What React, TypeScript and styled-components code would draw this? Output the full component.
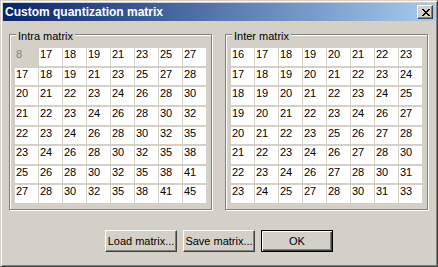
import React from "react";
import styled, { createGlobalStyle } from "styled-components";

const Global = createGlobalStyle`
  html, body { margin: 0; padding: 0; background: #d4d0c8; }
  * { box-sizing: border-box; }
`;

const Window = styled.div`
  width: 438px;
  height: 267px;
  background: #d4d0c8;
  border: 1px solid;
  border-color: #d4d0c8 #404040 #404040 #d4d0c8;
  box-shadow: inset 1px 1px #ffffff, inset -1px -1px #808080;
  padding: 2px;
  display: flex;
  flex-direction: column;
  font-family: "Liberation Sans", Arial, sans-serif;
  font-size: 11px;
  color: #000;
`;

const TitleBar = styled.div`
  height: 18px;
  display: flex;
  align-items: center;
  padding: 0 2px;
  background: linear-gradient(to right, #0a246a, #a6caf0);
`;

const Title = styled.div`
  flex: 1;
  color: #fff;
  font-weight: bold;
  font-size: 12px;
  line-height: 14px;
  white-space: nowrap;
`;

const CloseButton = styled.div`
  width: 16px;
  height: 14px;
  background: #d4d0c8;
  border: 1px solid;
  border-color: #ffffff #404040 #404040 #ffffff;
  box-shadow: inset -1px -1px #808080;
  display: flex;
  align-items: flex-start;
  padding: 3px 2px 2px 4px;
`;

const Body = styled.div`
  flex: 1;
  display: flex;
  flex-direction: column;
  padding: 13px 0 0 6px;
`;

const Groups = styled.div`
  display: flex;
  gap: 13px;
`;

const Group = styled.div`
  position: relative;
  width: 203px;
  height: 176px;
  border: 1px solid #808080;
  box-shadow: inset 1px 1px #ffffff, 1px 1px #ffffff;
  padding: 13px 5px 6px 5px;
`;

const GroupLabel = styled.div`
  position: absolute;
  top: -5px;
  left: 6px;
  padding: 0 2px;
  line-height: 13px;
  background: #d4d0c8;
`;

const Grid = styled.div`
  display: grid;
  grid-template-columns: repeat(8, 23px);
  grid-template-rows: repeat(8, 1fr);
  column-gap: 1px;
  row-gap: 2px;
  height: 155px;
`;

const Cell = styled.div<{ $disabled?: boolean }>`
  background: ${(p) => (p.$disabled ? "transparent" : "#ffffff")};
  color: ${(p) => (p.$disabled ? "#808080" : "#000000")};
  line-height: 13px;
  padding-left: 1px;
`;

const Buttons = styled.div`
  display: flex;
  justify-content: center;
  gap: 6px;
  margin-top: 20px;
  padding-right: 6px;
`;

const Button = styled.div<{ $default?: boolean }>`
  width: 72px;
  height: 22px;
  display: flex;
  align-items: center;
  justify-content: center;
  background: #d4d0c8;
  border: 1px solid;
  border-color: ${(p) =>
    p.$default ? "#000000" : "#ffffff #404040 #404040 #ffffff"};
  box-shadow: ${(p) =>
    p.$default
      ? "inset 1px 1px #ffffff, inset -1px -1px #404040, inset -2px -2px #808080"
      : "inset -1px -1px #808080"};
  line-height: 13px;
`;

const intra = [
  [8, 17, 18, 19, 21, 23, 25, 27],
  [17, 18, 19, 21, 23, 25, 27, 28],
  [20, 21, 22, 23, 24, 26, 28, 30],
  [21, 22, 23, 24, 26, 28, 30, 32],
  [22, 23, 24, 26, 28, 30, 32, 35],
  [23, 24, 26, 28, 30, 32, 35, 38],
  [25, 26, 28, 30, 32, 35, 38, 41],
  [27, 28, 30, 32, 35, 38, 41, 45],
];

const inter = [
  [16, 17, 18, 19, 20, 21, 22, 23],
  [17, 18, 19, 20, 21, 22, 23, 24],
  [18, 19, 20, 21, 22, 23, 24, 25],
  [19, 20, 21, 22, 23, 24, 26, 27],
  [20, 21, 22, 23, 25, 26, 27, 28],
  [21, 22, 23, 24, 26, 27, 28, 30],
  [22, 23, 24, 26, 27, 28, 30, 31],
  [23, 24, 25, 27, 28, 30, 31, 33],
];

const CloseIcon = () => (
  <svg width="8" height="7" viewBox="0 0 8 7" shapeRendering="crispEdges">
    <path
      fill="#000"
      d="M0 0h2v1H0zM6 0h2v1H6zM1 1h2v1H1zM5 1h2v1H5zM2 2h4v1H2zM3 3h2v1H3zM2 4h4v1H2zM1 5h2v1H1zM5 5h2v1H5zM0 6h2v1H0zM6 6h2v1H6z"
    />
  </svg>
);

const MatrixGroup = ({
  label,
  data,
  firstDisabled,
}: {
  label: string;
  data: number[][];
  firstDisabled?: boolean;
}) => (
  <Group>
    <GroupLabel>{label}</GroupLabel>
    <Grid>
      {data.flatMap((row, r) =>
        row.map((v, c) => (
          <Cell key={`${r}-${c}`} $disabled={firstDisabled && r === 0 && c === 0}>
            {v}
          </Cell>
        ))
      )}
    </Grid>
  </Group>
);

export default function App() {
  return (
    <>
      <Global />
      <Window>
        <TitleBar>
          <Title>Custom quantization matrix</Title>
          <CloseButton>
            <CloseIcon />
          </CloseButton>
        </TitleBar>
        <Body>
          <Groups>
            <MatrixGroup label="Intra matrix" data={intra} firstDisabled />
            <MatrixGroup label="Inter matrix" data={inter} />
          </Groups>
          <Buttons>
            <Button>Load matrix...</Button>
            <Button>Save matrix...</Button>
            <Button $default>OK</Button>
          </Buttons>
        </Body>
      </Window>
    </>
  );
}
